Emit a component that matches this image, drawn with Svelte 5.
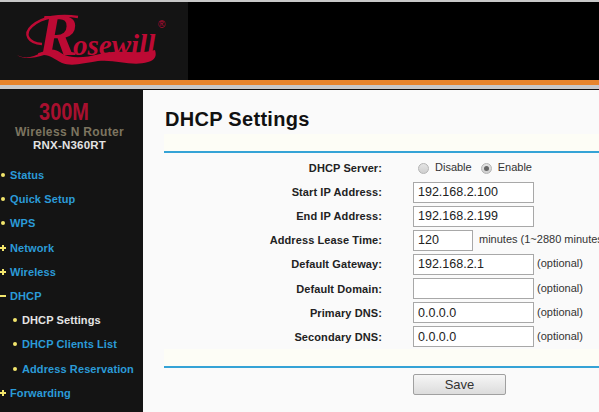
<script>
  const nav = [
    { label: "Status", mark: "dot" },
    { label: "Quick Setup", mark: "dot" },
    { label: "WPS", mark: "dot" },
    { label: "Network", mark: "plus" },
    { label: "Wireless", mark: "plus" },
    { label: "DHCP", mark: "minus" },
    { label: "DHCP Settings", mark: "dot", sub: true, active: true },
    { label: "DHCP Clients List", mark: "dot", sub: true },
    { label: "Address Reservation", mark: "dot", sub: true },
    { label: "Forwarding", mark: "plus" }
  ];

  const fields = [
    { label: "Start IP Address:", value: "192.168.2.100" },
    { label: "End IP Address:", value: "192.168.2.199" },
    { label: "Address Lease Time:", value: "120", short: true, note: "minutes (1~2880 minutes" },
    { label: "Default Gateway:", value: "192.168.2.1", note: "(optional)" },
    { label: "Default Domain:", value: "", note: "(optional)" },
    { label: "Primary DNS:", value: "0.0.0.0", note: "(optional)" },
    { label: "Secondary DNS:", value: "0.0.0.0", note: "(optional)" }
  ];
</script>

<div class="page">
  <header>
    <div class="logo">
      <svg class="swoosh" width="188" height="80" viewBox="0 0 188 80">
        <path d="M17 55 C24 59 33 58 42 52 C50 48 56 49 61 53 C70 59 84 58 100 54 C118 49 140 55 155 50 C157 56 155 60 148 62 C132 67 116 59 98 61 C84 63 72 67 62 63 C54 59 50 55 44 55 C34 58 24 60 17 55 Z" fill="#bd0a34" />
        <path d="M42 44 C28 43 23 34 32 26 C42 17 60 14 78 17" fill="none" stroke="#bd0a34" stroke-width="2.4" />
      </svg>
      <div class="brand"><span class="big">R</span>osewill</div>
      <span class="reg">®</span>
    </div>
  </header>
  <div class="stripe"></div>

  <div class="body">
    <aside>
      <div class="product">
        <div class="speed"><span>300M</span></div>
        <div class="kind">Wireless N Router</div>
        <div class="model">RNX-N360RT</div>
      </div>
      <ul>
        {#each nav as item}
          <li class:sub={item.sub} class:active={item.active}>
            <span class="mark {item.mark}"></span>{item.label}
          </li>
        {/each}
      </ul>
    </aside>

    <main>
      <h1>DHCP Settings</h1>
      <div class="band top"></div>
      <form>
        <div class="row server">
          <span class="label">DHCP Server:</span>
          <div class="radios">
            <span class="radio"></span><span class="opt">Disable</span>
            <span class="radio on"></span><span class="opt">Enable</span>
          </div>
        </div>
        {#each fields as f}
          <div class="row">
            <span class="label">{f.label}</span>
            <input class:short={f.short} value={f.value} />
            {#if f.note}<span class="note">{f.note}</span>{/if}
          </div>
        {/each}
      </form>
      <div class="band bottom"></div>
      <div class="actions"><button type="button">Save</button></div>
    </main>
  </div>
</div>

<style>
  :global(body) {
    margin: 0;
    overflow: hidden;
  }

  .page {
    width: 599px;
    height: 412px;
    overflow: hidden;
    font-family: "Liberation Sans", Arial, sans-serif;
    background: #fafafa;
  }

  header {
    height: 78px;
    margin-top: 2px;
    background: #000;
    box-shadow: 0 -2px 0 #c8c8c8;
  }

  .logo {
    position: relative;
    width: 188px;
    height: 78px;
    background: #141414;
  }

  .brand {
    position: absolute;
    left: 38px;
    top: 15px;
    font-family: "Liberation Serif", serif;
    font-style: italic;
    font-weight: bold;
    font-size: 29px;
    line-height: 36px;
    color: #bd0a34;
    white-space: nowrap;
  }

  .big {
    font-size: 60px;
    line-height: 36px;
    margin-right: -5px;
  }

  .swoosh {
    position: absolute;
    left: 0;
    top: -2px;
  }

  .reg {
    position: absolute;
    left: 158px;
    top: 18px;
    font-size: 10px;
    line-height: 10px;
    color: #bd0a34;
  }

  .stripe {
    height: 5px;
    background: #e8852c;
    border-bottom: 4px solid #c9c9c9;
    box-shadow: 0 1px 0 #111;
  }

  .body {
    display: flex;
    height: 322px;
    margin-top: 1px;
  }

  aside {
    width: 143px;
    flex: none;
    background: #141414;
  }

  .product {
    height: 73px;
    text-align: center;
    padding-top: 11px;
    box-sizing: border-box;
  }

  .speed {
    font-size: 24px;
    line-height: 22px;
    font-weight: bold;
    color: #a8102f;
    margin-right: 14px;
  }

  .speed span {
    display: inline-block;
    transform: scaleX(0.83);
  }

  .kind {
    font-size: 12px;
    line-height: 14px;
    font-weight: bold;
    color: #7d7560;
    letter-spacing: 0.35px;
    margin: 2px 0 0 -4px;
  }

  .model {
    font-size: 11.5px;
    line-height: 13px;
    font-weight: bold;
    color: #e2e2e2;
    letter-spacing: 0.2px;
    margin: 0 0 0 -4px;
  }

  ul {
    list-style: none;
    margin: 0;
    padding: 0;
  }

  li {
    display: flex;
    align-items: center;
    height: 24.2px;
    padding-left: 10px;
    position: relative;
    font-size: 11px;
    font-weight: bold;
    color: #2b9bd8;
    letter-spacing: 0.1px;
    white-space: nowrap;
  }

  li.sub {
    padding-left: 22px;
  }

  li.active {
    color: #e4e4e4;
  }

  .mark {
    position: absolute;
    left: 0;
    top: 50%;
    background: #f2e56c;
  }

  li.sub .mark {
    left: 12px;
  }

  .dot {
    width: 4px;
    height: 4px;
    margin-top: -2px;
    margin-left: 1px;
    border-radius: 50%;
  }

  .minus,
  .plus {
    width: 6px;
    height: 2px;
    margin-top: -1px;
  }

  .plus::after {
    content: "";
    position: absolute;
    left: 2px;
    top: -2px;
    width: 2px;
    height: 6px;
    background: #f2e56c;
  }

  main {
    flex: 1;
    min-width: 0;
    padding-left: 21px;
    background: #fafafa;
  }

  h1 {
    margin: 0 0 0 1px;
    height: 44px;
    padding-top: 16px;
    box-sizing: border-box;
    font-size: 20px;
    line-height: 26px;
    font-weight: bold;
    color: #111;
    letter-spacing: 0.3px;
  }

  .band {
    background: #fdfdf6;
  }

  .band.top,
  .band.bottom {
    height: 17px;
    border-bottom: 2px solid #35a3d6;
  }

  form {
    padding-top: 3px;
  }

  .row {
    display: flex;
    align-items: center;
    height: 24.15px;
    white-space: nowrap;
  }

  .row.server {
    height: 24px;
  }

  .label {
    width: 218px;
    flex: none;
    text-align: right;
    font-size: 11px;
    font-weight: bold;
    color: #222;
    letter-spacing: 0.1px;
  }

  input {
    box-sizing: border-box;
    width: 121px;
    height: 21px;
    margin: 0 0 0 31px;
    padding: 1px 4px;
    border: 1px solid #a8a8a8;
    background: #fff;
    font-family: inherit;
    font-size: 12.5px;
    color: #222;
    flex: none;
  }

  input.short {
    width: 60px;
  }

  .note {
    margin-left: 3px;
    font-size: 11px;
    color: #333;
    position: relative;
    top: -1px;
  }

  input.short + .note {
    margin-left: 6px;
  }

  .radios {
    display: flex;
    align-items: center;
    margin-left: 36px;
    font-size: 11px;
    color: #333;
  }

  .radio {
    position: relative;
    width: 11px;
    height: 11px;
    box-sizing: border-box;
    border-radius: 50%;
    border: 1px solid #b4b4b4;
    background: linear-gradient(#e4e4e4, #cfcfcf);
  }

  .radio.on::after {
    content: "";
    position: absolute;
    left: 2px;
    top: 2px;
    width: 5px;
    height: 5px;
    border-radius: 50%;
    background: #666;
  }

  .opt {
    margin: 0 9px 2px 6px;
  }

  .opt:last-child {
    margin-right: 0;
  }

  .actions {
    padding: 6px 0 0 249px;
  }

  button {
    display: block;
    width: 93px;
    height: 21px;
    padding: 0;
    border: 1px solid #a0a0a0;
    border-radius: 2px;
    background: linear-gradient(#f6f6f6, #dcdcdc);
    font-family: inherit;
    font-size: 13px;
    color: #333;
  }
</style>
